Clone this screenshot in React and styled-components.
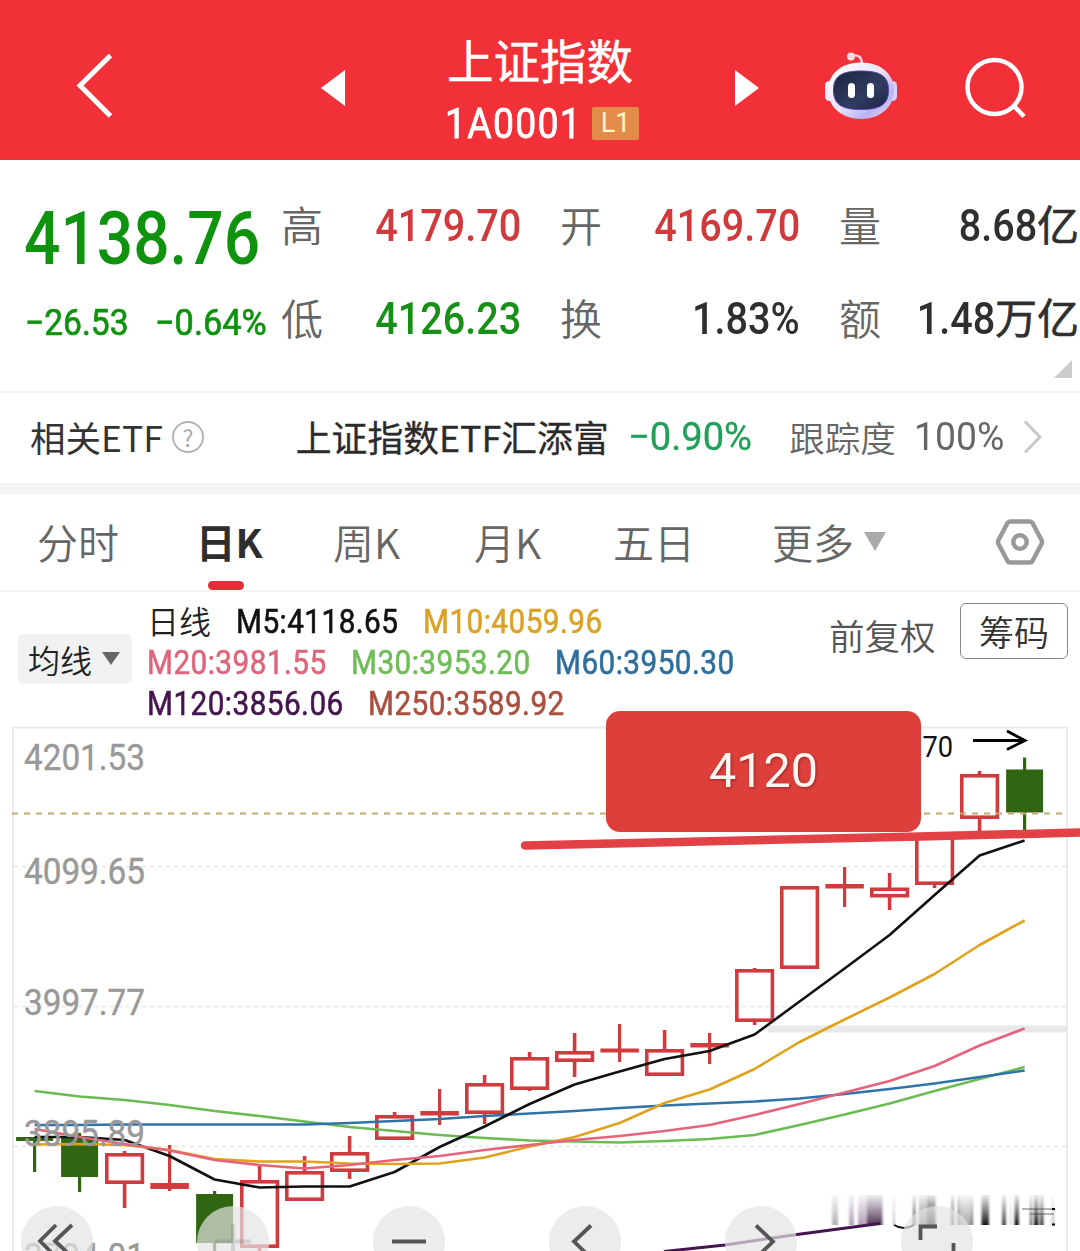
import React from "react"
import styled, { createGlobalStyle } from "styled-components"

const GlobalStyle = createGlobalStyle`
  body {
    margin: 0;
    background: #fff;
    font-family: "Noto Sans CJK SC", sans-serif;
  }
  * {
    box-sizing: border-box;
  }
  svg {
    display: block;
    flex: none;
  }
`

const Screen = styled.div`
  display: flex;
  flex-direction: column;
  width: 1080px;
  height: 1251px;
  overflow: hidden;
  background: #fff;
`

/* narrow numerals used for every price on the page */
const Figure = styled.span`
  display: inline-block;
  flex: none;
  font-family: Roboto, "Noto Sans CJK SC", sans-serif;
  font-size: ${(p) => p.$size}px;
  font-weight: ${(p) => p.$weight || 400};
  letter-spacing: ${(p) => p.$spacing || 0}px;
  color: ${(p) => p.$color || "inherit"};
  -webkit-text-stroke: ${(p) => p.$stroke || 0}px currentColor;
  line-height: 1;
  white-space: nowrap;
  transform: scaleX(${(p) => p.$stretch || 0.9});
  transform-origin: ${(p) => p.$origin || "left"} center;
`

/* ---------- header ---------- */

const Header = styled.header`
  display: grid;
  grid-template-columns: 321px 124px 290px 90px 140px 1fr;
  align-items: center;
  height: 160px;
  flex: none;
  padding-top: 17px;
  background: #f13037;
  border-bottom: 1px solid #dd3a40;
  color: #fff;
`

const BackSlot = styled.div`
  padding: 0 0 4px 75px;
`

const RobotSlot = styled.div`
  padding-bottom: 4px;
`

const TitleBlock = styled.div`
  display: flex;
  flex-direction: column;
  gap: 24px;
  padding-bottom: 1px;
`

const Title = styled.h1`
  margin: 0 0 0 2px;
  font-size: 46.5px;
  line-height: 48px;
  font-weight: 400;
  -webkit-text-stroke: 0.5px #fff;
`

const CodeRow = styled.div`
  display: flex;
  align-items: center;
  height: 34px;
`

const CodeText = styled.div`
  width: 147px;
  line-height: 1;
`

const LevelBadge = styled.span`
  display: flex;
  align-items: center;
  justify-content: center;
  width: 47px;
  height: 33px;
  border-radius: 2px;
  background: #e38c4a;
  color: #fff6cf;
`

/* ---------- quote ---------- */

const Quote = styled.section`
  display: grid;
  grid-template-columns: 217px 240px 240px 240px;
  column-gap: 39px;
  position: relative;
  height: 231px;
  flex: none;
  padding: 19px 0 0 25px;
`

const Latest = styled.div`
  display: flex;
  flex-direction: column;
  color: #0f930f;
`

const LatestPrice = styled.div`
  height: 119px;
  padding-top: 23px;
  line-height: 1;
  margin-left: -1px;
`

const Changes = styled.div`
  display: flex;
  height: 50px;
  align-items: center;
`

const Change = styled.div`
  width: 130px;
  flex: none;
  line-height: 1;
`

const StatColumn = styled.div`
  display: flex;
  flex-direction: column;
`

const Stat = styled.div`
  display: flex;
  align-items: center;
  justify-content: space-between;
  height: 93px;
`

const StatLabel = styled.span`
  padding-bottom: 4px;
  font-size: 42px;
  line-height: 1;
  font-weight: 350;
  color: #666;
`

const StatValue = styled.span`
  display: flex;
  align-items: center;
  justify-content: flex-end;
  font-size: 42px;
  line-height: 1;
  font-weight: 400;
  white-space: nowrap;
  color: ${(p) => p.$color};
`

const Unit = styled.span`
  padding-bottom: 5px;
  -webkit-text-stroke: 0.6px currentColor;
`

const ExpandCorner = styled.i`
  position: absolute;
  right: 8px;
  bottom: 13px;
  border-left: 18px solid transparent;
  border-bottom: 18px solid #ccc;
`

/* ---------- related etf ---------- */

const EtfRow = styled.section`
  display: flex;
  align-items: center;
  height: 103px;
  flex: none;
  padding: 0 37px 2px 30px;
  border-top: 2px solid #f4f4f4;
  border-bottom: 11px solid #f4f4f4;
  font-size: 35.5px;
  line-height: 1;
  white-space: nowrap;
  color: #333;
`

const EtfTitle = styled.span`
  width: 142px;
`

const Help = styled.span`
  display: flex;
  align-items: center;
  justify-content: center;
  width: 32px;
  height: 32px;
  margin-right: 92px;
  border: 2px solid #b3b3b3;
  border-radius: 50%;
  font-size: 23px;
  color: #aaa;
`

const EtfName = styled.span`
  width: 333px;
  font-size: 35.8px;
  font-weight: 400;
  color: #2b2b2b;
  -webkit-text-stroke: 0.3px #2b2b2b;
`

const EtfChange = styled.span`
  width: 161px;
`

const Tracking = styled.span`
  width: 125px;
  color: #666;
  font-weight: 350;
`

const TrackingValue = styled.span`
  width: 109px;
`

/* ---------- tabs ---------- */

const Tabs = styled.nav`
  display: grid;
  grid-template-columns: 159px 137px 141px 139px 159px 223px 1fr;
  align-items: center;
  height: 98px;
  flex: none;
  padding-left: 37px;
  border-bottom: 2px solid #f4f4f4;
`

const Tab = styled.div`
  display: flex;
  align-items: center;
  gap: 10px;
  position: relative;
  height: 96px;
  padding-bottom: 2px;
  font-size: ${(p) => (p.$active ? 39.5 : 41)}px;
  line-height: 1;
  font-weight: ${(p) => (p.$active ? 700 : 350)};
  color: ${(p) => (p.$active ? "#2e2e2e" : "#666")};

  &::after {
    content: "";
    display: ${(p) => (p.$active ? "block" : "none")};
    position: absolute;
    left: 12px;
    bottom: 0;
    width: 36px;
    height: 9px;
    border-radius: 5px;
    background: #db3237;
  }
`

const Caret = styled.i`
  border-left: ${(p) => p.$w / 2}px solid transparent;
  border-right: ${(p) => p.$w / 2}px solid transparent;
  border-top: ${(p) => p.$h}px solid ${(p) => p.$color};
`

/* ---------- legend ---------- */

const Legend = styled.section`
  display: flex;
  align-items: flex-start;
  height: 128px;
  flex: none;
  padding: 10px 12px 0 18px;
`

const AverageButton = styled.button`
  display: flex;
  align-items: center;
  justify-content: space-between;
  width: 114px;
  height: 50px;
  margin: 32px 15px 0 0;
  padding: 0 12px 1px 10px;
  border: 0;
  border-radius: 5px;
  background: #f1f1f1;
  font: 350 32px/1 "Noto Sans CJK SC", sans-serif;
  color: #222;
`

const LegendLines = styled.div`
  width: 682px;
`

const LegendLine = styled.div`
  display: flex;
  align-items: center;
  height: 41px;
`

const PeriodName = styled.span`
  width: 89px;
  padding-bottom: 6px;
  font-size: 32px;
  line-height: 1;
  font-weight: 350;
  color: #222;
`

const LegendItem = styled.span`
  width: ${(p) => p.$width}px;
  flex: none;
  line-height: 1;
`

const Adjust = styled.span`
  width: 131px;
  padding-top: 15px;
  font-size: 35.5px;
  line-height: 1;
  font-weight: 350;
  color: #555;
`

const ChipsButton = styled.button`
  width: 108px;
  height: 56px;
  margin-top: 1px;
  padding: 0 0 2px;
  border: 1.5px solid #888;
  border-radius: 6px;
  background: #fff;
  font: 350 35px/1 "Noto Sans CJK SC", sans-serif;
  color: #333;
`

/* ---------- chart ---------- */

const ChartArea = styled.section`
  position: relative;
  height: 531px;
  flex: none;
`

const PriceCallout = styled.div`
  display: flex;
  align-items: center;
  justify-content: center;
  position: absolute;
  left: 606px;
  top: -9px;
  width: 315px;
  height: 121px;
  border-radius: 14px;
  background: #dd403b;
  font: 400 48.5px/1 Roboto, sans-serif;
  color: #fff6f2;
  text-shadow: 1px 1px 3px rgba(110, 20, 20, 0.6);
`

const TrendLine = styled.svg`
  position: absolute;
  left: 0;
  top: 0;
`

const Controls = styled.div`
  display: flex;
  gap: 104px;
  position: absolute;
  left: 21px;
  top: 486px;
  height: 45px;
  overflow: hidden;
`

const RoundButton = styled.div`
  width: 72px;
  height: 72px;
  flex: none;
  border-radius: 50%;
  background: rgba(228, 228, 228, 0.7);

  svg {
    opacity: ${(p) => (p.$disabled ? 0.18 : 1)};
  }
`

const RED = "#cf3b3e"
const GREEN = "#306612"
const DOWN = "#179017"
const UP = "#d03a3c"

// body top, body bottom, wick top, wick bottom, falling
const candles = [
  [1137, 1141, 1137, 1172, true],
  [1138, 1177, 1133, 1192, true],
  [1153, 1184, 1151, 1208],
  [1183, 1189, 1145, 1191],
  [1194, 1243, 1191, 1260, true],
  [1180, 1248, 1166, 1260],
  [1171, 1201, 1156, 1201],
  [1152, 1172, 1136, 1179],
  [1115, 1140, 1112, 1140],
  [1111, 1115.5, 1089, 1125],
  [1083, 1114, 1075, 1124],
  [1057, 1090, 1052, 1091],
  [1051, 1062, 1033, 1077],
  [1048.5, 1052.5, 1024, 1062],
  [1049, 1076, 1030, 1076],
  [1043, 1047.5, 1033, 1064],
  [969, 1022, 968, 1025],
  [886, 969, 886, 969],
  [884, 888.5, 867, 907],
  [887.5, 897.5, 873, 910],
  [834, 885, 834, 888],
  [774, 819, 771, 833],
  [769.5, 812.5, 757.5, 830, true],
]

const averages = [
  { color: "#6cbb52", ys: [1091, 1096.5, 1100, 1105, 1111, 1116, 1121.5, 1127, 1131, 1135, 1138, 1140.5, 1141.5, 1142.5, 1141, 1139, 1135, 1125, 1114.5, 1103.5, 1091, 1079, 1067] },
  { color: "#2f74a8", ys: [1125, 1125, 1124.5, 1124.5, 1124.5, 1124.5, 1124.5, 1123, 1121, 1119, 1116, 1113.5, 1111, 1108, 1105.5, 1103.5, 1101.5, 1098.5, 1094, 1089, 1083.5, 1077, 1070.5] },
  { color: "#111", ys: [1137, 1137, 1140, 1156, 1179.5, 1187.5, 1186.5, 1186.5, 1172, 1147, 1126.5, 1104, 1084.5, 1071.5, 1059, 1051, 1034.5, 1001.5, 968.5, 935, 895, 855.5, 840.5] },
  { color: "#dfa21c", ys: [1144.5, 1144, 1145, 1150, 1159, 1161.5, 1161.5, 1163.5, 1164, 1163.5, 1157.5, 1146.5, 1137, 1123, 1103, 1089.5, 1069, 1042, 1019.5, 997.5, 974, 945, 920.5] },
  { color: "#e5637b", ys: [1129, 1137, 1144, 1150.5, 1160, 1165, 1168.5, 1165, 1160, 1156, 1150, 1145, 1140, 1136, 1131, 1125, 1115, 1104, 1092.5, 1081, 1066, 1045.5, 1028.5] },
]

const axisLabels = [
  ["4201.53", 770],
  ["4099.65", 884],
  ["3997.77", 1015],
  ["3895.89", 1145.5],
  ["3794.01", 1269],
]

// x, width, opacity, colour of the faded strip in the corner
const smudges = [
  [832, 6, 0.45, "#444"],
  [849, 5, 0.5, "#5a3a60"],
  [858, 25, 0.5, "#5a3a60"],
  [867, 15, 0.85, "#3a1a40"],
  [893, 1.5, 0.4, "#222"],
  [913, 2.5, 0.9, "#111"],
  [919, 17, 0.6, "#222"],
  [927, 8, 0.9, "#000"],
  [951, 3, 0.8, "#222"],
  [957.5, 2, 0.8, "#222"],
  [958, 15, 0.45, "#333"],
  [971, 2, 0.5, "#222"],
  [981.5, 7.5, 0.95, "#000"],
  [1002, 4, 0.8, "#111"],
  [1010, 1, 0.4, "#333"],
  [1014.5, 4.5, 0.95, "#000"],
  [1030, 2, 0.8, "#111"],
  [1034, 4.5, 0.95, "#000"],
  [1040, 3.5, 0.85, "#111"],
  [1052, 2, 0.35, "#111"],
]

const slotX = (i) => 34.6 + i * 45

const Candle = ({ x, data: [top, bottom, high, low, falling] }) => {
  const color = falling ? GREEN : RED
  if (falling || bottom - top < 7) {
    const w = falling ? 37 : 38.5
    return (
      <g fill={color}>
        <rect x={x - w / 2} y={top} width={w} height={bottom - top} />
        <rect x={x - 1.6} y={high} width={3.2} height={low - high} />
      </g>
    )
  }
  return (
    <g fill={color}>
      <rect x={x - 1.8} y={high} width={3.6} height={Math.max(0, top - high + 1)} />
      <rect x={x - 1.8} y={bottom - 1} width={3.6} height={Math.max(0, low - bottom + 1)} />
      <rect x={x - 17.8} y={top + 1.8} width={35.6} height={bottom - top - 3.6} fill="none" stroke={color} strokeWidth="3.6" />
    </g>
  )
}

const KLineChart = () => (
  <svg width="1080" height="531" viewBox="0 720 1080 531">
    <defs>
      <linearGradient id="fade" x1="0" y1="0" x2="0" y2="1">
        <stop offset="0" stopColor="#fff" stopOpacity="0.05" />
        <stop offset="0.6" stopColor="#fff" stopOpacity="0.6" />
        <stop offset="1" stopColor="#fff" stopOpacity="1" />
      </linearGradient>
      <mask id="fadeMask">
        <rect x="820" y="1194" width="250" height="32" fill="url(#fade)" />
      </mask>
      <filter id="smear">
        <feGaussianBlur stdDeviation="0.9 0" />
      </filter>
    </defs>
    <path d="M13 1251V727.5H1067V1251" fill="none" stroke="#e9e9e9" strokeWidth="2" />
    {[866.5, 1006.5, 1146.5].map((y) => (
      <path key={y} d={`M14 ${y}H1066`} stroke="#e6e6e6" strokeWidth="1.6" strokeDasharray="4 4" />
    ))}
    <rect x="768" y="1025.5" width="299" height="7" fill="#e8e8e8" />
    {candles.map((c, i) => (
      <Candle key={i} x={slotX(i)} data={c} />
    ))}
    <path d="M12 813.5H1066" stroke="#c2ab77" strokeWidth="2" strokeDasharray="6 6" />
    {averages.map((a) => (
      <polyline
        key={a.color}
        points={a.ys.map((y, i) => `${slotX(i)},${y}`).join(" ")}
        fill="none"
        stroke={a.color}
        strokeWidth="2.6"
        strokeLinejoin="round"
      />
    ))}
    <path d="M664 1251.5L725 1245L797 1234.5L880 1223.5" fill="none" stroke="#45154f" strokeWidth="3" />
    <g fontFamily="Roboto, sans-serif" fontSize="36" fill="#999" stroke="#999" strokeWidth="0.4">
      {axisLabels.map(([label, y]) => (
        <text key={label} x="24" y={y} textLength="121" lengthAdjust="spacingAndGlyphs">
          {label}
        </text>
      ))}
    </g>
    <text x="854" y="757" fontFamily="Roboto, sans-serif" fontSize="29.5" fill="#111" textLength="99" lengthAdjust="spacingAndGlyphs">
      4179.70
    </text>
    <path d="M973 740.5H1024M1007 731L1025 740.5L1007 749.5" fill="none" stroke="#000" strokeWidth="2.8" />
    <g mask="url(#fadeMask)">
      <g filter="url(#smear)">
        {smudges.map(([x, w, o, fill]) => (
          <rect key={x} x={x} y="1195" width={w} height="30" fill={fill} opacity={o} />
        ))}
      </g>
    </g>
    <path d="M894 1225Q904 1231 914 1225" fill="none" stroke="#111" strokeWidth="2" />
    <path d="M1022 1209H1054M1030 1214H1054" stroke="#333" strokeWidth="1.2" opacity="0.7" />
    <path d="M1052 1209H1055M1052 1224.5H1055" stroke="#000" strokeWidth="2" />
  </svg>
)

const RobotIcon = () => (
  <svg width="72" height="68" viewBox="0 0 72 68">
    <defs>
      <linearGradient id="shell" x1="0" y1="0" x2="1" y2="1">
        <stop offset="0" stopColor="#fff" />
        <stop offset="0.5" stopColor="#e9e3fb" />
        <stop offset="0.75" stopColor="#b9b3f5" />
        <stop offset="1" stopColor="#f3dcf2" />
      </linearGradient>
      <linearGradient id="visor" x1="0" y1="0" x2="1" y2="1">
        <stop offset="0" stopColor="#1b2540" />
        <stop offset="0.6" stopColor="#303d60" />
        <stop offset="1" stopColor="#1b2142" />
      </linearGradient>
    </defs>
    <path d="M27 4C33 2 37 5 37 13" fill="none" stroke="#fbd3dc" strokeWidth="2.4" />
    <circle cx="26" cy="4.5" r="4" fill="#ffd9de" />
    <rect x="0" y="29" width="10" height="20" rx="4.500" fill="#efeafd" />
    <rect x="62" y="29" width="10" height="20" rx="4.500" fill="#d9d2fa" />
    <path d="M36 10.500C57 10.500 69 23 69 38.500C69 56 54 67 36 67C18 67 3 56 3 38.500C3 23 15 10.500 36 10.500Z" fill="url(#shell)" />
    <path d="M36 19C55 19 63.500 24 63.500 38C63.500 52 56 57.500 36 57.500C16 57.500 8.500 52 8.500 38C8.500 24 17 19 36 19Z" fill="url(#visor)" stroke="#5044a8" strokeWidth="1" />
    <rect x="23" y="31" width="7" height="15" rx="3.5" fill="#fff" />
    <rect x="42" y="31" width="7" height="15" rx="3.5" fill="#fff" />
  </svg>
)

const controls = [
  { name: "first", d: "M35 19L19 35L35 51M51 19L34 35L51 51" },
  { name: "zoomIn", d: "M18 35.5H54M36 18V54", disabled: true },
  { name: "zoomOut", d: "M19 35.5H53" },
  { name: "prev", d: "M42 19.5L25 35.5L42 52" },
  { name: "next", d: "M31 19.5L48 35.5L31 52" },
  { name: "rotate", d: "M36 20.5H19.5V34M52.5 37V52H36" },
]

const stats = [
  [
    { label: "高", value: "4179.70", color: UP },
    { label: "低", value: "4126.23", color: DOWN },
  ],
  [
    { label: "开", value: "4169.70", color: UP },
    { label: "换", value: "1.83%", color: "#2f2f2f" },
  ],
  [
    { label: "量", value: "8.68", unit: "亿", color: "#2f2f2f" },
    { label: "额", value: "1.48", unit: "万亿", color: "#2f2f2f" },
  ],
]

const legend = [
  [
    { text: "M5:4118.65", color: "#111", width: 187 },
    { text: "M10:4059.96", color: "#dba226", width: 204 },
  ],
  [
    { text: "M20:3981.55", color: "#de667c", width: 204 },
    { text: "M30:3953.20", color: "#6fbd56", width: 204 },
    { text: "M60:3950.30", color: "#2f6f9d", width: 204 },
  ],
  [
    { text: "M120:3856.06", color: "#45154f", width: 221 },
    { text: "M250:3589.92", color: "#a9503f", width: 221 },
  ],
]

const App = () => {
  return (
    <Screen>
      <GlobalStyle />
      <Header>
        <BackSlot>
          <svg width="40" height="66" viewBox="0 0 40 66" fill="none" stroke="#fff" strokeWidth="5">
            <path d="M35.5 2.5L5 32.5L35.5 63" />
          </svg>
        </BackSlot>
        <svg width="24" height="36" viewBox="0 0 24 36" fill="#fff">
          <path d="M24 0V36L0 18Z" />
        </svg>
        <TitleBlock>
          <Title>上证指数</Title>
          <CodeRow>
            <CodeText>
              <Figure $size={42} $stroke={0.8} $spacing={1.4} $stretch={0.89}>1A0001</Figure>
            </CodeText>
            <LevelBadge>
              <Figure $size={27} $origin="center" $stretch={1}>L1</Figure>
            </LevelBadge>
          </CodeRow>
        </TitleBlock>
        <svg width="24" height="36" viewBox="0 0 24 36" fill="#fff">
          <path d="M0 0V36L24 18Z" />
        </svg>
        <RobotSlot>
          <RobotIcon />
        </RobotSlot>
        <svg width="62" height="62" viewBox="0 0 62 62" fill="none" stroke="#fff" strokeWidth="4.5">
          <circle cx="29.5" cy="30" r="27" />
          <path d="M49 49L59 59.5" />
        </svg>
      </Header>

      <Quote>
        <Latest>
          <LatestPrice>
            <Figure $size={74} $weight={500} $stretch={0.865}>4138.76</Figure>
          </LatestPrice>
          <Changes>
            <Change>
              <Figure $size={36.5} $stroke={0.7} $stretch={0.92}>−26.53</Figure>
            </Change>
            <Change>
              <Figure $size={36.5} $stroke={0.7} $stretch={0.94}>−0.64%</Figure>
            </Change>
          </Changes>
        </Latest>
        {stats.map((column, i) => (
          <StatColumn key={i}>
            {column.map((s) => (
              <Stat key={s.label}>
                <StatLabel>{s.label}</StatLabel>
                <StatValue $color={s.color}>
                  <Figure $size={44} $weight={500} $origin="right">{s.value}</Figure>
                  {s.unit && <Unit>{s.unit}</Unit>}
                </StatValue>
              </Stat>
            ))}
          </StatColumn>
        ))}
        <ExpandCorner />
      </Quote>

      <EtfRow>
        <EtfTitle>相关ETF</EtfTitle>
        <Help>?</Help>
        <EtfName>上证指数ETF汇添富</EtfName>
        <EtfChange>
          <Figure $size={38.5} $color="#20a058" $stroke={0.3} $stretch={0.99}>−0.90%</Figure>
        </EtfChange>
        <Tracking>跟踪度</Tracking>
        <TrackingValue>
          <Figure $size={38.5} $color="#666" $stretch={0.97}>100%</Figure>
        </TrackingValue>
        <svg width="20" height="34" viewBox="0 0 20 34" fill="none" stroke="#c8c8c8" strokeWidth="3">
          <path d="M2 1.5L17 17L2 32.5" />
        </svg>
      </EtfRow>

      <Tabs>
        <Tab>分时</Tab>
        <Tab $active>日K</Tab>
        <Tab>周K</Tab>
        <Tab>月K</Tab>
        <Tab>五日</Tab>
        <Tab>
          更多
          <Caret $w={23} $h={19} $color="#aaa" />
        </Tab>
        <svg width="50" height="48" viewBox="0 0 50 48" fill="none" stroke="#999" strokeWidth="4.5" strokeLinejoin="round">
          <path d="M15 3.500H35Q36.500 3.500 37.500 5L46.500 22Q47.500 24 46.500 26L37.500 43Q36.500 44.500 35 44.500H15Q13.500 44.500 12.500 43L3.500 26Q2.500 24 3.500 22L12.500 5Q13.500 3.500 15 3.500Z" />
          <circle cx="25" cy="24" r="6.7" />
        </svg>
      </Tabs>

      <Legend>
        <AverageButton>
          均线
          <Caret $w={19} $h={13} $color="#666" />
        </AverageButton>
        <LegendLines>
          {legend.map((line, i) => (
            <LegendLine key={i}>
              {i === 0 && <PeriodName>日线</PeriodName>}
              {line.map((item) => (
                <LegendItem key={item.text} $width={item.width}>
                  <Figure $size={32.5} $stroke={0.6} $spacing={0.5} $stretch={0.914} $color={item.color}>
                    {item.text}
                  </Figure>
                </LegendItem>
              ))}
            </LegendLine>
          ))}
        </LegendLines>
        <Adjust>前复权</Adjust>
        <ChipsButton>筹码</ChipsButton>
      </Legend>

      <ChartArea>
        <KLineChart />
        <PriceCallout>4120</PriceCallout>
        <TrendLine width="1080" height="531" viewBox="0 720 1080 531">
          <path d="M525 845.5L700 841.5L920 836.5L1084 832.5" fill="none" stroke="#e24145" strokeWidth="8.5" strokeLinecap="round" />
        </TrendLine>
        <Controls>
          {controls.map((c) => (
            <RoundButton key={c.name} $disabled={c.disabled}>
              <svg width="72" height="72" viewBox="0 0 72 72" fill="none" stroke="#555" strokeWidth="3.8">
                <path d={c.d} />
              </svg>
            </RoundButton>
          ))}
        </Controls>
      </ChartArea>
    </Screen>
  )
}

export default App
